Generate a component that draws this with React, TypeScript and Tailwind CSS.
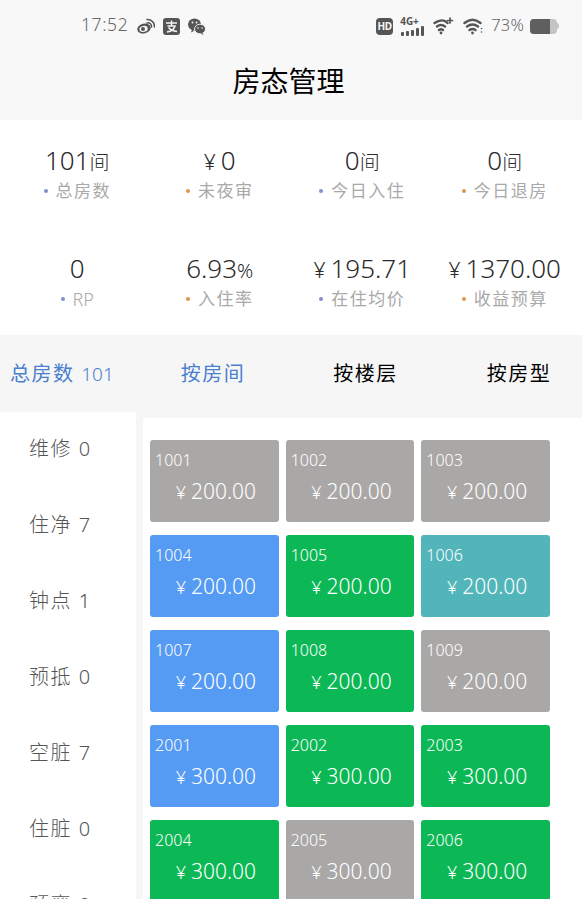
const font = '[font-family:"Noto_Sans","Noto_Sans_CJK_SC",sans-serif]';

const stats = [
  { value: '101', unit: '间', label: '总房数', dot: 'bg-[#7f8fd0]' },
  { yen: true, value: '0', label: '未夜审', dot: 'bg-[#e0954f]' },
  { value: '0', unit: '间', label: '今日入住', dot: 'bg-[#7f8fd0]' },
  { value: '0', unit: '间', label: '今日退房', dot: 'bg-[#e0954f]' },
  { value: '0', label: 'RP', dot: 'bg-[#7f8fd0]' },
  { value: '6.93', unit: '%', label: '入住率', dot: 'bg-[#e0954f]' },
  { yen: true, value: '195.71', label: '在住均价', dot: 'bg-[#7f8fd0]' },
  { yen: true, value: '1370.00', label: '收益预算', dot: 'bg-[#e0954f]' },
];

const sideItems = ['维修 0', '住净 7', '钟点 1', '预抵 0', '空脏 7', '住脏 0', '预离 0'];

const gray = 'bg-[#aaa8a7]';
const blue = 'bg-[#559bf3]';
const green = 'bg-[#0bb855]';
const teal = 'bg-[#52b5b9]';

const rooms = [
  { no: '1001', price: '200.00', color: gray },
  { no: '1002', price: '200.00', color: gray },
  { no: '1003', price: '200.00', color: gray },
  { no: '1004', price: '200.00', color: blue },
  { no: '1005', price: '200.00', color: green },
  { no: '1006', price: '200.00', color: teal },
  { no: '1007', price: '200.00', color: blue },
  { no: '1008', price: '200.00', color: green },
  { no: '1009', price: '200.00', color: gray },
  { no: '2001', price: '300.00', color: blue },
  { no: '2002', price: '300.00', color: green },
  { no: '2003', price: '300.00', color: green },
  { no: '2004', price: '300.00', color: green },
  { no: '2005', price: '300.00', color: gray },
  { no: '2006', price: '300.00', color: green },
];

const StatusBar = () => (
  <div className="h-[50px] flex items-center justify-between pl-[81px] pr-[23px] pt-[2px] text-[#666666]">
    <div className="flex items-center gap-[8px]">
      <span className="text-[17.5px] tracking-[0.6px] font-light -mt-[3px] mr-[1px]">17:52</span>
      <svg width="18" height="16" viewBox="0 0 18 16" fill="none">
        <g transform="rotate(-14 7 10.500)">
          <ellipse cx="7" cy="10.500" rx="6.800" ry="4.800" fill="#555" />
          <ellipse cx="6.500" cy="10.800" rx="4.200" ry="3" fill="#f8f8f8" />
        </g>
        <circle cx="6" cy="11" r="2" fill="#555" />
        <path d="M10 5a3.500 3.500 0 0 1 4.500 4" stroke="#555" strokeWidth="1.500" strokeLinecap="round" />
        <path d="M10 1.500a7 7 0 0 1 7.500 7.500" stroke="#555" strokeWidth="1.600" strokeLinecap="round" />
      </svg>
      <svg width="17" height="17" viewBox="0 0 17 17">
        <rect width="17" height="17" rx="3" fill="#555" />
        <path d="M3 5h11M8.500 2.500v5M4.500 8h7.500c-1 3.500-4 5.500-8 6M5.500 9.500c2 2.500 5 3.500 8.500 4" stroke="#f8f8f8" strokeWidth="1.500" fill="none" />
      </svg>
      <svg width="18" height="17" viewBox="0 0 18 17">
        <ellipse cx="6.500" cy="6.500" rx="6.500" ry="6" fill="#555" />
        <path d="M4 11.500l-1 3 3-1.500z" fill="#555" />
        <ellipse cx="12" cy="11" rx="5.500" ry="4.800" fill="#555" stroke="#f8f8f8" strokeWidth="0.900" />
        <path d="M14.500 15l1 2-3-1.500z" fill="#555" />
        <circle cx="4.500" cy="4.500" r="0.900" fill="#f8f8f8" />
        <circle cx="8.500" cy="4.500" r="0.900" fill="#f8f8f8" />
        <circle cx="10" cy="10" r="0.800" fill="#f8f8f8" />
        <circle cx="14" cy="10" r="0.800" fill="#f8f8f8" />
      </svg>
    </div>
    <div className="flex items-center gap-[7px]">
      <div className="w-[17px] h-[17px] rounded-[4px] bg-[#555555] text-[#f8f8f8] text-[10px] font-bold leading-[17px] text-center tracking-[-0.3px]">HD</div>
      <div className="flex flex-col items-center w-[25px]">
        <span className="text-[10px] font-bold leading-[10px] self-start text-[#555555]">4G+</span>
        <svg width="25" height="10" viewBox="0 0 25 10" fill="#555">
          <rect x="1" y="6" width="3" height="4" rx="1" />
          <rect x="6" y="5" width="3" height="5" rx="1" />
          <rect x="11" y="4" width="3" height="6" rx="1" />
          <rect x="16" y="2" width="3" height="8" rx="1" />
          <rect x="21" y="0" width="3" height="10" rx="1" />
        </svg>
      </div>
      <svg width="21" height="18" viewBox="0 0 21 18" fill="none" stroke="#555" strokeWidth="2.400" strokeLinecap="round" className="ml-[1px]">
        <path d="M1.500 6c5-3.500 10-3.500 13 0M4 9.500c2.500-2 5.500-2 8 0M6 13c1.500-1 2.500-1 4 0" />
        <circle cx="8" cy="16" r="1.400" fill="#555" stroke="none" />
        <path d="M17 1v5M14.500 3.500h5" strokeWidth="1.700" />
      </svg>
      <svg width="21" height="18" viewBox="0 0 21 18" fill="none" stroke="#555" strokeWidth="2.400" strokeLinecap="round" className="ml-[2px]">
        <path d="M1.500 6c5-4 11-4 16 0M4 9.500c3.500-2.500 7.500-2.500 11 0M6.500 13c2-1.300 4-1.300 6 0" />
        <circle cx="9.500" cy="16" r="1.400" fill="#555" stroke="none" />
        <circle cx="18.500" cy="11.500" r="0.800" fill="#555" stroke="none" />
        <circle cx="18.500" cy="15" r="0.800" fill="#555" stroke="none" />
      </svg>
      <span className="text-[16.500px] tracking-[0.2px] font-light -mt-[1px]">73%</span>
      <div className="flex items-center -ml-[1px]">
        <div className="w-[27px] h-[15px] rounded-[4px] bg-[#c4c4c4] overflow-hidden">
          <div className="w-[20px] h-full bg-[#5f5f5f]" />
        </div>
        <div className="w-[2px] h-[6px] rounded-r-[2px] bg-[#c4c4c4]" />
      </div>
    </div>
  </div>
);

const App = () => {
  return (
    <div className={`w-[582px] h-[899px] overflow-hidden bg-white ${font}`}>
      <div className="bg-[#f8f8f8]">
        <StatusBar />
        <div className="h-[70px] flex items-center justify-center pb-[8px] pr-[5px] text-[28px] text-black">房态管理</div>
      </div>

      <div className="h-[215px] grid grid-cols-4 grid-rows-[108px_108px] pt-[21px] px-[6px]">
        {stats.map((s) => (
          <div key={s.label} className="flex flex-col items-center">
            <div className="h-[39px] flex items-baseline text-[26px] leading-[38px] text-[#2b2b2b] font-light whitespace-nowrap">
              {s.yen && <span className="text-[21px] mr-[5px]">¥</span>}
              {s.value}
              {s.unit && <span className="text-[20px]">{s.unit}</span>}
            </div>
            <div
              className={`h-[22px] flex items-center gap-[8px] leading-[22px] text-[#a9a9a9] ${
                s.label === 'RP' ? 'text-[18px] font-light tracking-normal' : 'text-[17px] tracking-[1.500px]'
              }`}
            >
              <span className={`w-[4px] h-[4px] rounded-full ${s.dot}`} />
              {s.label}
            </div>
          </div>
        ))}
      </div>

      <div className="h-[77px] flex items-center bg-[#f6f6f6] pl-[10px] text-[20px] tracking-[1.500px] whitespace-nowrap">
        <div className="text-[#4a7fd0]">
          总房数 <span className="font-light tracking-normal text-[19px]">101</span>
        </div>
        <div className="ml-[67px] text-[#4a7fd0]">按房间</div>
        <div className="ml-[88px] text-black">按楼层</div>
        <div className="ml-[89px] text-black">按房型</div>
      </div>

      <div className="flex bg-[#f6f6f6]">
        <div className="w-[136px] h-[487px] shrink-0 bg-white pt-[17px] flex flex-col gap-[36px]">
          {sideItems.map((item) => (
            <div key={item} className="h-[40px] leading-[40px] pl-[29px] text-[20px] tracking-[1.500px] text-[#555555] font-light">
              {item}
            </div>
          ))}
        </div>
        <div className="flex-1 ml-[7px] mt-[6px] bg-white pt-[22px] pl-[7px] pr-[32px]">
          <div className="grid grid-cols-3 gap-x-[7px] gap-y-[13px]">
            {rooms.map((r) => (
              <div key={r.no} className={`h-[82px] rounded-[3px] text-white ${r.color}`}>
                <div className="pl-[5px] pt-[9px] text-[16px] leading-[22px] font-light">{r.no}</div>
                <div className="flex items-baseline justify-center pl-[3px] text-[21px] leading-[30px] mt-[5px] font-light">
                  <span className="text-[18px] mr-[5px]">¥</span>
                  {r.price}
                </div>
              </div>
            ))}
          </div>
        </div>
      </div>
    </div>
  );
};

export default App;
